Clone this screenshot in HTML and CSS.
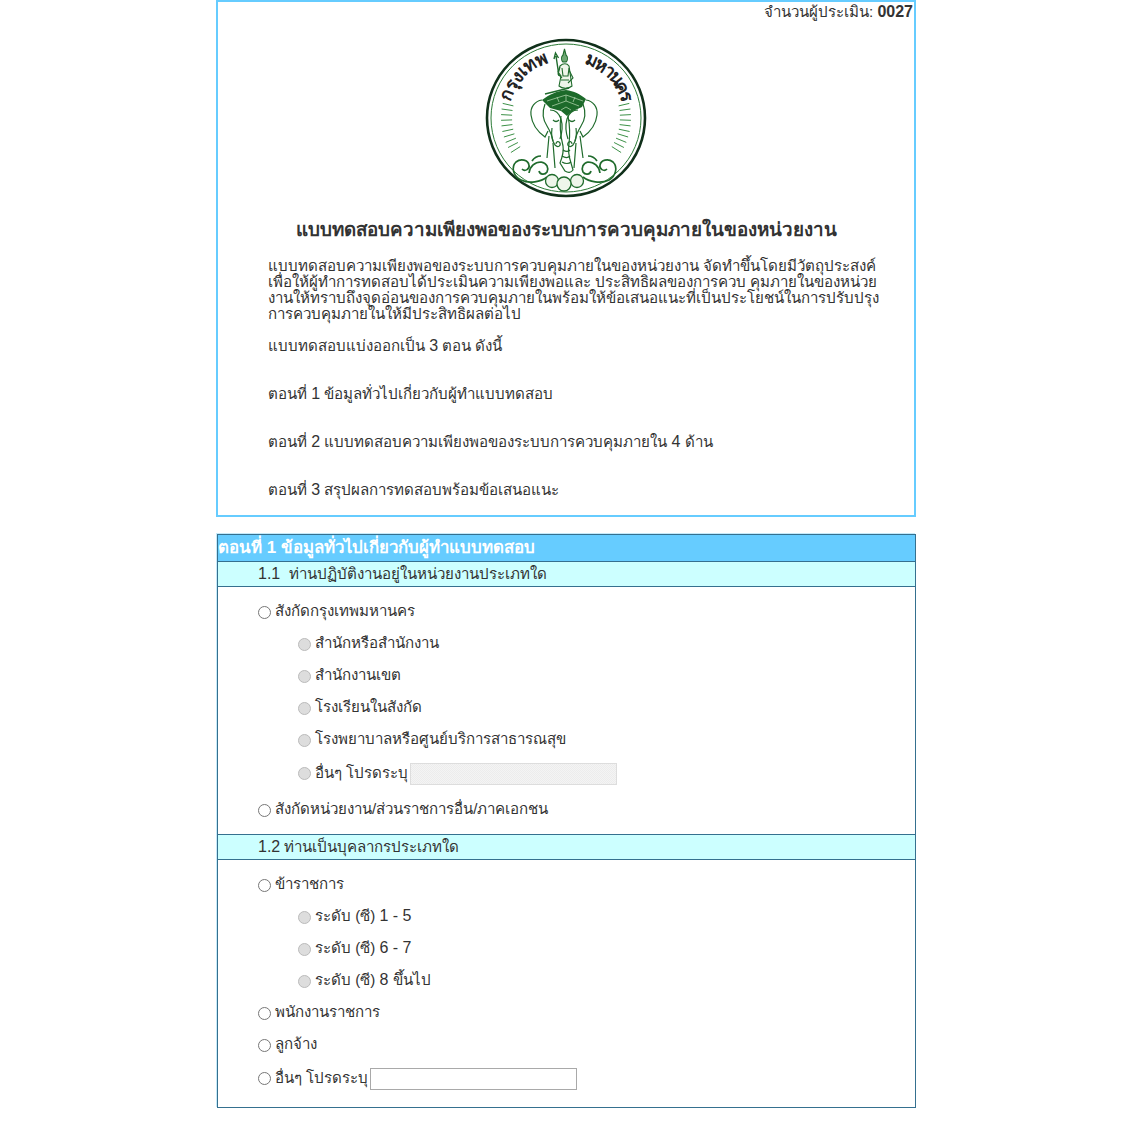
FILE: index.html
```html
<!DOCTYPE html>
<html lang="th">
<head>
<meta charset="UTF-8" />
<title>แบบทดสอบความเพียงพอของระบบการควบคุมภายใน</title>
<link rel="stylesheet" href="styles.css">
</head>
<body>
	<div class="page">
		<!-- intro box -->
		<div class="intro">
			<div class="counter">จำนวนผู้ประเมิน: <b class="num">0027</b></div>
			<div class="logo">
				<svg width="162" height="162" viewBox="0 0 162 162">
					<ellipse cx="81" cy="80" rx="79" ry="78" fill="#fff" stroke="#10301a" stroke-width="2.6"/>
					<ellipse cx="81" cy="80" rx="75" ry="74" fill="none" stroke="#2a7a35" stroke-width="1"/>
					<defs>
						<path id="arcL" d="M25 64 A58 58 0 0 1 63 25"/>
						<path id="arcR" d="M99 25 A58 58 0 0 1 137 64"/>
					</defs>
					<text class="logo-text"><textPath href="#arcL" textLength="58">กรุงเทพ</textPath></text>
					<text class="logo-text"><textPath href="#arcR" textLength="58">มหานคร</textPath></text>
					<!-- rays -->
					<g stroke="#3d9148" stroke-width="1">
						<path d="M28.4 67.9L17.7 65.4M27.5 72.5L16.6 71M27.1 77.2L16.1 76.6M27.1 81.9L16.1 82.3M27.4 86.6L16.5 87.9M28.2 91.2L17.4 93.5M29.4 95.8L18.9 99M30.9 100.2L20.7 104.4M32.9 104.5L23.1 109.5M35.2 108.6L25.9 114.5"/>
						<path d="M133.6 67.9L144.3 65.4M134.5 72.5L145.4 71M134.9 77.2L145.9 76.6M134.9 81.9L145.9 82.3M134.6 86.6L145.5 87.9M133.8 91.2L144.6 93.5M132.6 95.8L143.1 99M131.1 100.2L141.3 104.4M129.1 104.5L138.9 109.5M126.8 108.6L136.1 114.5"/>
					</g>
					<!-- rider -->
					<g fill="none" stroke="#1f6b2c" stroke-width="1.100">
						<path d="M74 38L71 18M69 21l1.500-6 3 5" stroke-width="1.400"/>
						<path d="M78 17l1.500-6 1.500 6c2 2 2 5 0 7h-3c-2-2-2-5 0-7z" fill="#6fa874"/>
						<path d="M75 28c3-3 7-3 9 0l3 20c-3 3-10 3-13 0l2-10-3-4z" fill="#eef5ea"/>
						<path d="M77 30l1 8 5 0 1-8M76 42l8 0M75 29l-2 7 4 4M84 32l4 8-5 5"/>
						<path d="M60 56l24-6" stroke-width="1.600"/>
					</g>
					<!-- saddle -->
					<path d="M57 62c8-6 15-9 24-10 8 1 14 4 20 9l-4 8-9 4-6 5-6-5-11-3z" fill="#1c6a2a"/>
					<path d="M62 63l19-6 17 6M67 68l14-5 13 5M76 72l5-3 5 3M72 59l2 5M81 57v6M90 59l-2 5" fill="none" stroke="#a9cfa6" stroke-width="0.800"/>
					<!-- elephant heads and trunks -->
					<g fill="none" stroke="#1f6b2c" stroke-width="1.200">
						<path d="M57 62c-7 1-12 7-11 15 1 9 7 17 14 22l3-6"/>
						<path d="M101 62c7 1 12 7 11 15-1 9-7 17-14 22l-3-6"/>
						<path d="M60 66c-3 8-2 16 2 22 3 5 5 9 6 15M98 66c3 8 2 16-2 22-3 5-5 9-6 15"/>
						<path d="M65 72c5 0 9 3 11 9 2 7 1 14-1 20M93 72c-5 0-9 3-11 9-2 7-1 14 1 20"/>
						<path d="M68 82c2 2 4 2 6 0M84 82c2 2 4 2 6 0"/>
						<path d="M67 90c-1 7 0 13 3 17 3 3 6 1 5-2-1-2-4-2-4 1M91 90c1 7 0 13-3 17-3 3-6 1-5-2 1-2 4-2 4 1"/>
						<path d="M76 78c-2 12 0 22 2 30 1 6-1 12-3 17l5 8c3 2 6 2 8-1l-2-7c-2-6-3-13-2-19 1-9 1-18-1-28"/>
						<path d="M78 112c3 2 5 2 7 0M77 118c3 2 6 2 8 0M77 124c3 2 7 2 9 0"/>
						<path d="M68 105l2 25M91 105l-2 25"/>
						<path d="M64 98l-2 22M95 98l3 22"/>
					</g>
					<!-- clouds, left then right -->
					<g fill="none" stroke="#1f6b2c" stroke-width="1.700">
						<path d="M62 139c-6 5-18 7-26 3-8-4-10-13-5-18 5-4 12-2 13 3 1 4-4 7-7 4"/>
						<path d="M44 135c1-7 6-11 12-11 6 1 8 6 6 10-2 3-7 3-8-1"/>
						<path d="M47 123c2-3 5-5 9-5"/>
						<path d="M98 139c6 5 18 7 26 3 7-4 9-13 4-18-5-4-12-2-13 3-1 4 4 7 7 4"/>
						<path d="M115 135c-1-7-6-11-12-11-5 1-7 6-5 10 2 3 7 3 8-1"/>
						<path d="M112 123c-2-3-5-5-9-5"/>
					</g>
					<!-- lumps under the feet -->
					<g fill="#eef5ea" stroke="#1f6b2c" stroke-width="1.300">
						<circle cx="67" cy="143" r="6.500"/>
						<circle cx="92" cy="143" r="6.500"/>
						<circle cx="79" cy="146" r="7"/>
					</g>
				</svg>
			</div>
			<h1 class="title">แบบทดสอบความเพียงพอของระบบการควบคุมภายในของหน่วยงาน</h1>
			<div class="desc">
				<p class="para">แบบทดสอบความเพียงพอของระบบการควบคุมภายในของหน่วยงาน จัดทำขึ้นโดยมีวัตถุประสงค์<br>เพื่อให้ผู้ทำการทดสอบได้ประเมินความเพียงพอและ ประสิทธิผลของการควบ คุมภายในของหน่วย<br>งานให้ทราบถึงจุดอ่อนของการควบคุมภายในพร้อมให้ข้อเสนอแนะที่เป็นประโยชน์ในการปรับปรุง<br>การควบคุมภายในให้มีประสิทธิผลต่อไป</p>
				<p class="line">แบบทดสอบแบ่งออกเป็น <span class="num">3</span> ตอน ดังนี้</p>
				<p class="line">ตอนที่ <span class="num">1</span> ข้อมูลทั่วไปเกี่ยวกับผู้ทำแบบทดสอบ</p>
				<p class="line">ตอนที่ <span class="num">2</span> แบบทดสอบความเพียงพอของระบบการควบคุมภายใน <span class="num">4</span> ด้าน</p>
				<p class="line">ตอนที่ <span class="num">3</span> สรุปผลการทดสอบพร้อมข้อเสนอแนะ</p>
			</div>
		</div>

		<!-- part 1 -->
		<div class="part">
			<div class="part-head">ตอนที่ <span class="num">1</span> ข้อมูลทั่วไปเกี่ยวกับผู้ทำแบบทดสอบ</div>
			<div class="q-head"><span class="num">1.1</span>&nbsp; ท่านปฏิบัติงานอยู่ในหน่วยงานประเภทใด</div>
			<div class="q-body">
				<label class="opt"><input type="radio" name="q1">สังกัดกรุงเทพมหานคร</label>
				<label class="opt sub"><input type="radio" disabled>สำนักหรือสำนักงาน</label>
				<label class="opt sub"><input type="radio" disabled>สำนักงานเขต</label>
				<label class="opt sub"><input type="radio" disabled>โรงเรียนในสังกัด</label>
				<label class="opt sub"><input type="radio" disabled>โรงพยาบาลหรือศูนย์บริการสาธารณสุข</label>
				<label class="opt sub other"><input type="radio" disabled><span class="other-label">อื่นๆ โปรดระบุ</span><input class="txt" type="text" disabled></label>
				<label class="opt tall"><input type="radio" name="q1">สังกัดหน่วยงาน/ส่วนราชการอื่น/ภาคเอกชน</label>
			</div>
			<div class="q-head"><span class="num">1.2</span> ท่านเป็นบุคลากรประเภทใด</div>
			<div class="q-body">
				<label class="opt"><input type="radio" name="q2">ข้าราชการ</label>
				<label class="opt sub"><input type="radio" disabled>ระดับ (ซี) <span class="num">1 - 5</span></label>
				<label class="opt sub"><input type="radio" disabled>ระดับ (ซี) <span class="num">6 - 7</span></label>
				<label class="opt sub"><input type="radio" disabled>ระดับ (ซี) <span class="num">8</span> ขึ้นไป</label>
				<label class="opt"><input type="radio" name="q2">พนักงานราชการ</label>
				<label class="opt"><input type="radio" name="q2">ลูกจ้าง</label>
				<label class="opt other"><input type="radio" name="q2"><span class="other-label">อื่นๆ โปรดระบุ</span><input class="txt" type="text"></label>
			</div>
		</div>
	</div>
</body>
</html>
```

FILE: styles.css
```css
body {margin: 0; background: #fff; color: #333; font-family: "Liberation Sans", "Noto Sans", "Noto Sans CJK SC", sans-serif; font-size: 15.1px;}
.page {width: 700px; margin-left: 216px;}
.num {font-size: 16px;}

.intro {height: 517px; box-sizing: border-box; border: 2px solid #66ccff;}
.counter {text-align: right; line-height: 20px; padding-right: 1px;}
.logo {margin-top: 16px; height: 162px; text-align: center;}
.logo-text {font-size: 18px; font-weight: bold; fill: #222;}
.title {margin: 20px 0 0; font-size: 18.75px; line-height: 20px; text-align: center; font-weight: bold;}
.desc {margin-top: 18px; padding-left: 50px; font-size: 15.1px;}
.para {margin: 0; line-height: 16px; white-space: nowrap;}
.line {margin: 16px 0 0; line-height: 16px;}
.line + .line {margin-top: 32px;}

.part {margin: 17px 0 0 1px; width: 699px; height: 574px; box-sizing: border-box; border: 1px solid #35708f; box-shadow: -1px -1px 0 #c5eafa;}
.part-head {background: #66ccff; color: #fff; font-size: 16.85px; font-weight: bold; line-height: 25px; height: 27px; border-bottom: 1px solid #35708f; box-sizing: border-box;}
.part-head .num {font-size: 17px;}
.q-head {background: #ccffff; height: 25px; line-height: 24px; padding-left: 40px; border-bottom: 1px solid #35708f; box-sizing: border-box;}
.q-body + .q-head {height: 26px; border-top: 1px solid #35708f;}
.q-body {padding: 8px 0 7px 40px;}

.opt {display: flex; align-items: center; height: 32px; white-space: pre;}
.other, .tall {height: 36px;}
.sub {padding-left: 40px;}
.opt input[type=radio] {appearance: none; box-sizing: border-box; width: 13px; height: 13px; margin: 3px 4px 0 0; flex: none; background: #fff; border: 1px solid #777; border-radius: 50%;}
.opt input[type=radio]:disabled {background: #ddd; border-color: #bbb;}
.other input[type=radio] {margin-top: 1px;}
.other-label {width: 90px; margin-right: 5px;}
.txt {width: 207px; height: 22px; box-sizing: border-box; margin: 2px 0 0; padding: 0; border: 1px solid #a9a9a9; background: #fff;}
.txt:disabled {border-color: #ddd; background: repeating-conic-gradient(#ececec 0 25%, #f4f4f4 0 50%) 0 0 / 2px 2px;}
```
